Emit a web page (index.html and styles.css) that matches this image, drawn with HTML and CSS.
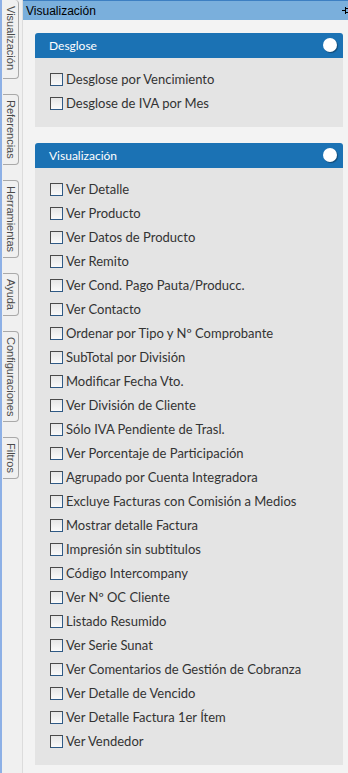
FILE: index.html
```html
<!DOCTYPE html>
<html lang="es">
<head>
  <meta charset="UTF-8" />
  <meta name="viewport" content="width=device-width, initial-scale=1" />
  <title>Visualización</title>
  <link rel="stylesheet" href="styles.css">
</head>
<body>
  <div class="layout">
    <!-- Side tabs -->
    <nav class="side-tabs">
      <div class="side-tab first">Visualización</div>
      <div class="side-tab">Referencias</div>
      <div class="side-tab">Herramientas</div>
      <div class="side-tab">Ayuda</div>
      <div class="side-tab">Configuraciones</div>
      <div class="side-tab">Filtros</div>
    </nav>

    <main class="main">
      <div class="title-bar">
        <span>Visualización</span>
        <svg class="pin" width="8" height="8" viewBox="0 0 8 8">
          <path d="M0 4.5H3M3.5 1V8M3.5 2.5H8M3.5 6.5H8M6.5 2.5V6.5" stroke="#000" stroke-width="1" fill="none"/>
        </svg>
      </div>

      <!-- Desglose -->
      <section class="panel">
        <div class="panel-head">
          <span>Desglose</span>
          <span class="toggle"></span>
        </div>
        <div class="panel-body">
          <label class="check"><span class="box"></span>Desglose por Vencimiento</label>
          <label class="check"><span class="box"></span>Desglose de IVA por Mes</label>
        </div>
      </section>

      <!-- Visualizacion -->
      <section class="panel">
        <div class="panel-head">
          <span>Visualización</span>
          <span class="toggle"></span>
        </div>
        <div class="panel-body">
          <label class="check"><span class="box"></span>Ver Detalle</label>
          <label class="check"><span class="box"></span>Ver Producto</label>
          <label class="check"><span class="box"></span>Ver Datos de Producto</label>
          <label class="check"><span class="box"></span>Ver Remito</label>
          <label class="check"><span class="box"></span>Ver Cond. Pago Pauta/Producc.</label>
          <label class="check"><span class="box"></span>Ver Contacto</label>
          <label class="check"><span class="box"></span>Ordenar por Tipo y Nº Comprobante</label>
          <label class="check"><span class="box"></span>SubTotal por División</label>
          <label class="check"><span class="box"></span>Modificar Fecha Vto.</label>
          <label class="check"><span class="box"></span>Ver División de Cliente</label>
          <label class="check"><span class="box"></span>Sólo IVA Pendiente de Trasl.</label>
          <label class="check"><span class="box"></span>Ver Porcentaje de Participación</label>
          <label class="check"><span class="box"></span>Agrupado por Cuenta Integradora</label>
          <label class="check"><span class="box"></span>Excluye Facturas con Comisión a Medios</label>
          <label class="check"><span class="box"></span>Mostrar detalle Factura</label>
          <label class="check"><span class="box"></span>Impresión sin subtitulos</label>
          <label class="check"><span class="box"></span>Código Intercompany</label>
          <label class="check"><span class="box"></span>Ver Nº OC Cliente</label>
          <label class="check"><span class="box"></span>Listado Resumido</label>
          <label class="check"><span class="box"></span>Ver Serie Sunat</label>
          <label class="check"><span class="box"></span>Ver Comentarios de Gestión de Cobranza</label>
          <label class="check"><span class="box"></span>Ver Detalle de Vencido</label>
          <label class="check"><span class="box"></span>Ver Detalle Factura 1er Ítem</label>
          <label class="check"><span class="box"></span>Ver Vendedor</label>
        </div>
      </section>
    </main>
  </div>
</body>
</html>
```

FILE: styles.css
```css
/* Base */
html, body {
  margin: 0;
  padding: 0;
  height: 100%;
}
body {
  background: #f3f3f3;
  font-family: 'Liberation Sans', Arial, sans-serif;
  color: #333;
  overflow: hidden;
}
.layout {
  display: flex;
  height: 100%;
}
/* Vertical tab strip */
.side-tabs {
  width: 20px;
  flex: none;
  border-left: 2px solid #8db0e6;
  border-right: 1px solid #dcdcdc;
  background: #f0f0f0;
  display: flex;
  flex-direction: column;
  gap: 15px;
}
.side-tab {
  writing-mode: vertical-rl;
  width: 15px;
  margin-left: 1px;
  padding: 5px 0;
  border: 1px solid #a9a9a9;
  border-left: none;
  border-radius: 0 4px 4px 0;
  font-size: 11px;
  line-height: 15px;
  color: #4a4a4a;
  text-align: center;
}
.side-tab.first {
  border-top: none;
  padding-top: 6px;
  padding-bottom: 8px;
}
/* Main area */
.main {
  flex: 1;
  min-width: 0;
}
.title-bar {
  height: 19px;
  border-top: 1px solid #3d7fc2;
  background: #7aafdc;
  display: flex;
  align-items: center;
  justify-content: space-between;
  padding-left: 3px;
  font-size: 12px;
  color: #000;
}
.pin {
  margin-right: -2px;
  margin-top: -2px;
}
/* Panels */
.panel {
  margin: 13px 5px 16px 12px;
}
.panel-head {
  height: 25px;
  background: #1b72b4;
  border-radius: 3px 3px 0 0;
  display: flex;
  align-items: center;
  justify-content: space-between;
  padding: 0 6px 0 14px;
  font-family: Lato, sans-serif;
  font-size: 12px;
  color: #fff;
}
.toggle {
  width: 14px;
  height: 14px;
  border-radius: 50%;
  background: #fff;
  box-shadow: 1px 1px 1px rgba(0, 0, 0, 0.35);
  margin-top: -2px;
}
.panel-body {
  background: #e4e4e4;
  padding: 9px 0 12px 15px;
}
.check {
  display: flex;
  align-items: center;
  height: 24px;
  font-family: Lato, sans-serif;
  font-size: 13px;
  color: #333;
}
.box {
  width: 11px;
  height: 11px;
  border: 1px solid #2f5a86;
  border-top-color: #4a4a4a;
  border-left-color: #4a4a4a;
  background: linear-gradient(#e6e6e6, #fafafa);
  margin-right: 3px;
  flex: none;
}
```
